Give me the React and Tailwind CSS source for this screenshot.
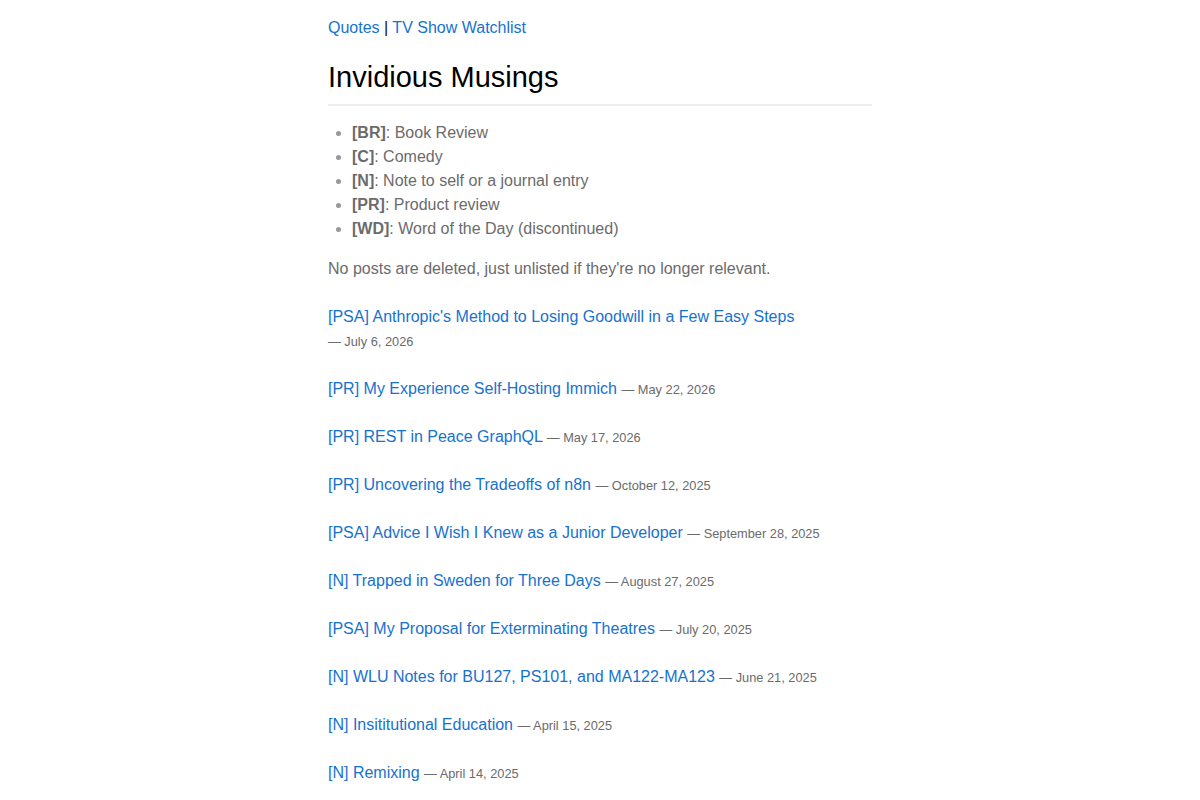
import React from 'react';

const legend = [
  ['BR', 'Book Review'],
  ['C', 'Comedy'],
  ['N', 'Note to self or a journal entry'],
  ['PR', 'Product review'],
  ['WD', 'Word of the Day (discontinued)'],
];

const posts = [
  ["[PSA] Anthropic's Method to Losing Goodwill in a Few Easy Steps", 'July 6, 2026'],
  ['[PR] My Experience Self-Hosting Immich', 'May 22, 2026'],
  ['[PR] REST in Peace GraphQL', 'May 17, 2026'],
  ['[PR] Uncovering the Tradeoffs of n8n', 'October 12, 2025'],
  ['[PSA] Advice I Wish I Knew as a Junior Developer', 'September 28, 2025'],
  ['[N] Trapped in Sweden for Three Days', 'August 27, 2025'],
  ['[PSA] My Proposal for Exterminating Theatres', 'July 20, 2025'],
  ['[N] WLU Notes for BU127, PS101, and MA122-MA123', 'June 21, 2025'],
  ['[N] Insititutional Education', 'April 15, 2025'],
  ['[N] Remixing', 'April 14, 2025'],
];

export default function App() {
  return (
    <div className="min-h-screen bg-white font-['Liberation_Sans',Arial,sans-serif] text-[16px] leading-6 text-[#6b6b6b]">
      <div className="mx-auto w-[544px] pt-4 pb-6">
        <nav className="text-[#111]">
          <a href="#" className="text-[#1672d0]">Quotes</a> | <a href="#" className="text-[#1672d0]">TV Show Watchlist</a>
        </nav>
        <h1 className="mt-[19px] border-b-2 border-[#eee] pb-[8px] text-[29px] leading-[37px] text-black">
          Invidious Musings
        </h1>
        <ul className="mt-[15px] list-disc pl-6 marker:text-[#999]">
          {legend.map(([k, v]) => (
            <li key={k}>
              <strong>[{k}]</strong>: {v}
            </li>
          ))}
        </ul>
        <p className="mt-4">No posts are deleted, just unlisted if they're no longer relevant.</p>
        <div className="mt-6 flex flex-col gap-6">
          {posts.map(([t, d]) => (
            <p key={t}>
              <a href="#" className="text-[#1672d0]">{t}</a>{' '}
              <span className="whitespace-nowrap text-[12.8px] leading-none text-[#6b6b6b]">— {d}</span>
            </p>
          ))}
        </div>
      </div>
    </div>
  );
}
